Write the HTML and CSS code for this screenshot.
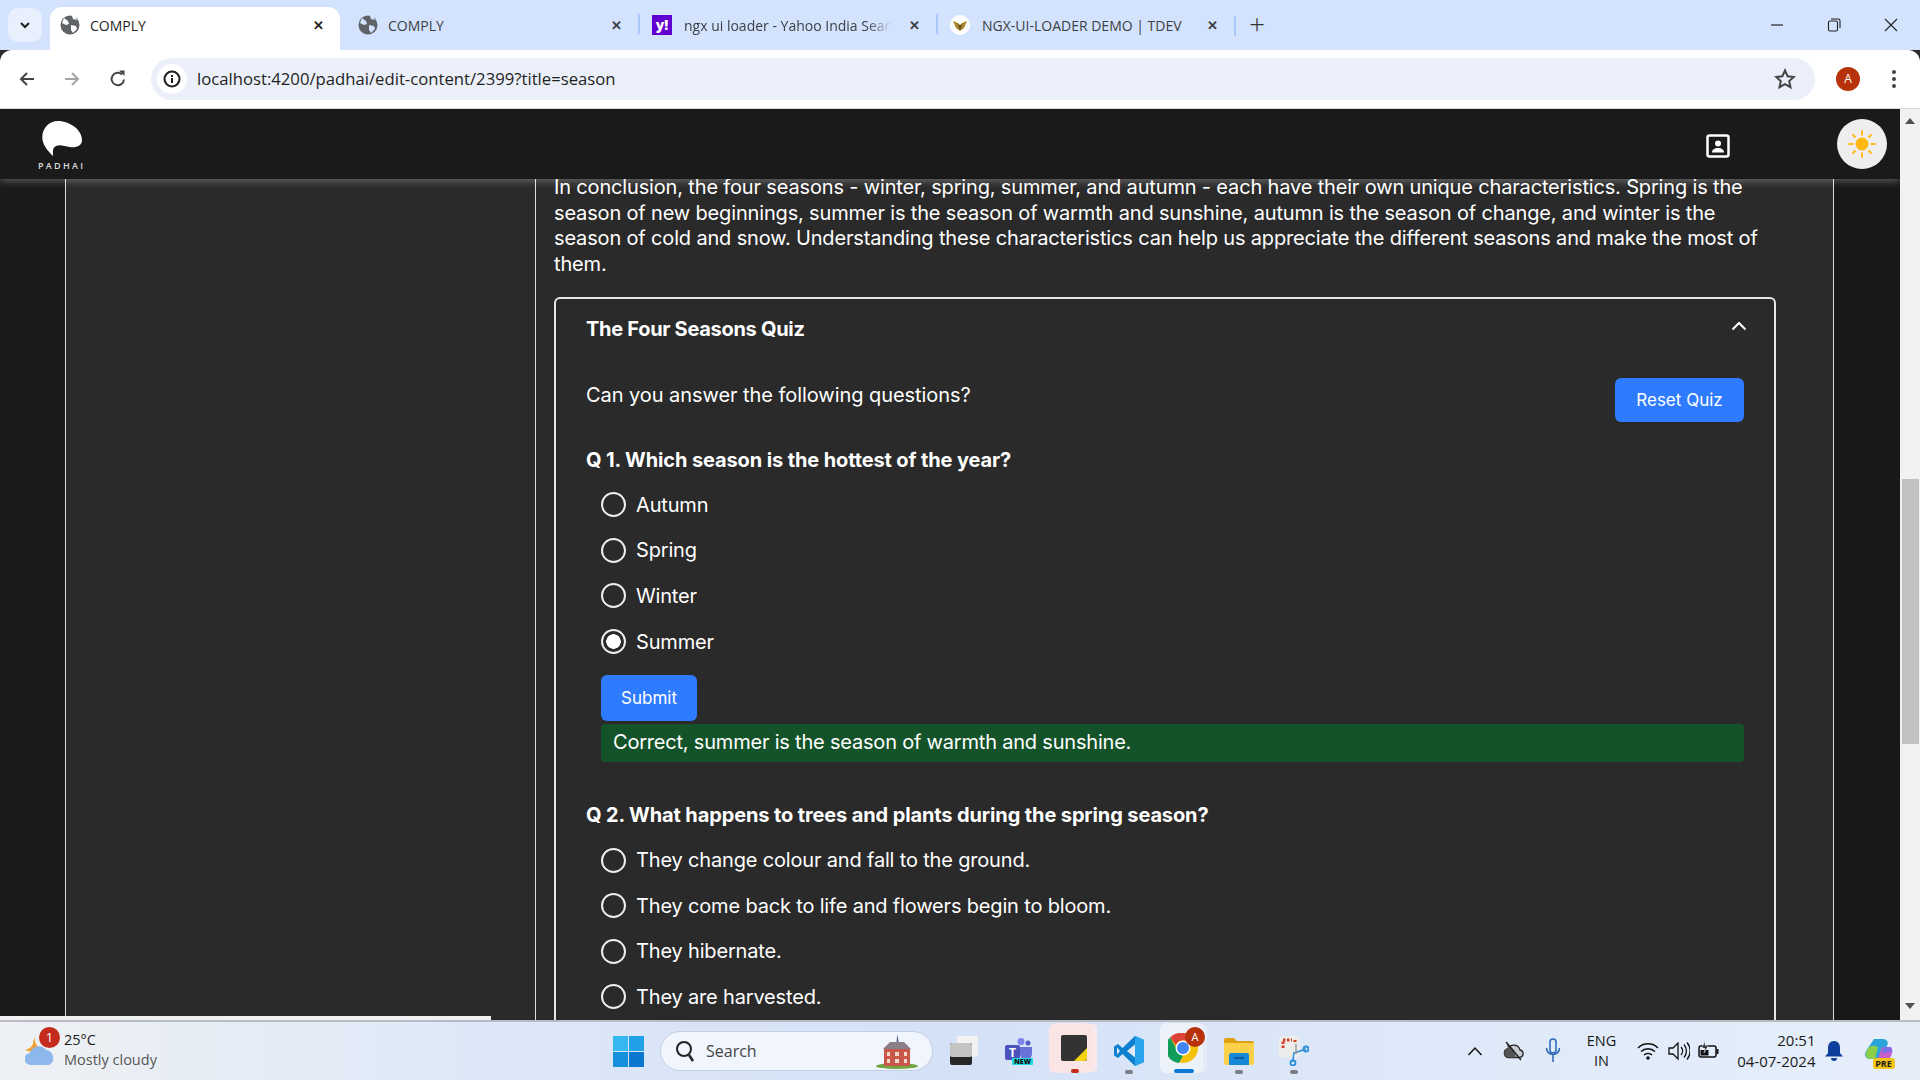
FILE: index.html
```html
<!DOCTYPE html>
<html lang="en">

<head>
    <meta charset="UTF-8">
    <title>COMPLY</title>
    <link rel="stylesheet" href="styles.css">
</head>

<body>
    <!-- browser tabs -->
    <div class="tabstrip">
        <div class="tab-list"><span class="tab-search"><svg width="14" height="14" viewBox="0 0 14 14"><path d="M3 5l4 4 4-4" fill="none" stroke="#1f1f1f" stroke-width="2"/></svg></span></div>
        <div class="tab active">
            <svg class="fav" viewBox="0 0 20 20"><circle cx="10" cy="10" r="9.5" fill="#5f6368"/><path d="M4 3l4 3 1 3-3 1-4-2zM11 10l5 1 1 3-4 4-2-3zM12 1l1 3 4 1-2-4z" fill="#fff"/></svg>
            <span class="tab-title">COMPLY</span><span class="tab-x">✕</span>
        </div>
        <div class="tab">
            <svg class="fav" viewBox="0 0 20 20"><circle cx="10" cy="10" r="9.5" fill="#5f6368"/><path d="M4 3l4 3 1 3-3 1-4-2zM11 10l5 1 1 3-4 4-2-3zM12 1l1 3 4 1-2-4z" fill="#d3e3fd"/></svg>
            <span class="tab-title">COMPLY</span><span class="tab-x">✕</span>
        </div>
        <div class="tab sep">
            <span class="fav yahoo">y!</span>
            <span class="tab-title fade">ngx ui loader - Yahoo India Sear</span><span class="tab-x">✕</span>
        </div>
        <div class="tab sep">
            <svg class="fav" viewBox="0 0 20 20"><circle cx="10" cy="10" r="10" fill="#fff"/><path d="M3 6l5 2 2 2 2-2 5-2-3 7-4 3-4-3z" fill="#a8862c"/><path d="M8 9l2 2 2-2-2 6z" fill="#4a3b18"/></svg>
            <span class="tab-title">NGX-UI-LOADER DEMO | TDEV</span><span class="tab-x">✕</span>
        </div>
        <span class="tab-plus">+</span>
        <div class="win-btns">
            <svg width="14" height="14" viewBox="0 0 14 14"><path d="M1 7h12" stroke="#222" stroke-width="1.2"/></svg>
            <svg width="14" height="14" viewBox="0 0 14 14"><rect x="1.5" y="3" width="9" height="10" rx="1.5" fill="none" stroke="#222" stroke-width="1.1"/><path d="M4 1h7.500a1.500 1.500 0 0 1 1.500 1.500V10" fill="none" stroke="#222" stroke-width="1.1"/></svg>
            <svg width="14" height="14" viewBox="0 0 14 14"><path d="M1 1l12 12M13 1L1 13" stroke="#222" stroke-width="1.1"/></svg>
        </div>
    </div>

    <!-- address bar -->
    <div class="toolbar">
        <svg class="nav-ic" viewBox="0 0 20 20"><path d="M17 10H4M10 4l-6 6 6 6" fill="none" stroke="#444" stroke-width="2"/></svg>
        <svg class="nav-ic" viewBox="0 0 20 20"><path d="M3 10h13M10 4l6 6-6 6" fill="none" stroke="#a3a5a9" stroke-width="2"/></svg>
        <svg class="nav-ic" viewBox="0 0 20 20"><path d="M16 10.500A6.200 6.200 0 1 1 14 5.400" fill="none" stroke="#444" stroke-width="2"/><path d="M11 1.500h5.500V7z" fill="#444"/></svg>
        <div class="omnibox">
            <span class="site-info"><svg width="18" height="18" viewBox="0 0 18 18"><circle cx="9" cy="9" r="7.500" fill="none" stroke="#1f1f1f" stroke-width="2"/><path d="M9 8v5M9 5v2" stroke="#1f1f1f" stroke-width="2"/></svg></span>
            <span class="url">localhost:4200/padhai/edit-content/2399?title=season</span>
            <svg class="star" width="22" height="22" viewBox="0 0 22 22"><path d="M11 2.500l2.600 5.700 6.200.7-4.600 4.200 1.300 6.100-5.500-3.100-5.500 3.100 1.300-6.100-4.600-4.200 6.200-.7z" fill="none" stroke="#444" stroke-width="2"/></svg>
        </div>
        <span class="avatar">A</span>
        <svg class="kebab" width="6" height="20" viewBox="0 0 6 20"><circle cx="3" cy="3" r="2" fill="#444"/><circle cx="3" cy="10" r="2" fill="#444"/><circle cx="3" cy="17" r="2" fill="#444"/></svg>
    </div>

    <!-- app -->
    <div class="app">
        <div class="viewport">
            <header class="topbar">
                <div class="logo">
                    <svg width="40" height="35" viewBox="0 0 40 35"><path d="M16 0C28 0 40 9 40 19c0 6-6 8-12 7-6-1-10-3-14-1-4 2-3 6-3 10C7 31 2 26 .5 19-1 9 6 0 16 0z" fill="#fff"/></svg>
                    <span class="logo-text">PADHAI</span>
                </div>
                <svg class="user-ic" width="24" height="24" viewBox="0 0 24 24"><rect x="1.500" y="1.500" width="21" height="21" rx="2" fill="none" stroke="#fff" stroke-width="2.500"/><circle cx="12" cy="9.500" r="3" fill="#fff"/><path d="M6 18.500c0-3 2.500-4.500 6-4.500s6 1.500 6 4.500z" fill="#fff"/></svg>
                <span class="theme-btn">
                    <svg width="30" height="30" viewBox="0 0 30 30"><circle cx="15" cy="15" r="6.500" fill="#fdb813"/><path d="M15 1.500v5M15 23.500v5M1.500 15h5M23.500 15h5M5.500 5.500l3 3M21.500 21.500l3 3M24.500 5.500l-3 3M8.500 21.500l-3 3" stroke="#fdb813" stroke-width="2"/></svg>
                </span>
            </header>
            <div class="page">
                <div class="rail"></div>
                <aside class="sidebar"></aside>
                <main class="main">
                    <p class="intro">In conclusion, the four seasons - winter, spring, summer, and autumn - each have their own unique characteristics. Spring is the season of new beginnings, summer is the season of warmth and sunshine, autumn is the season of change, and winter is the season of cold and snow. Understanding these characteristics can help us appreciate the different seasons and make the most of them.</p>
                    <section class="quiz">
                        <div class="quiz-head">
                            <h2>The Four Seasons Quiz</h2>
                            <svg width="16" height="10" viewBox="0 0 16 10"><path d="M1.500 8.500L8 2l6.500 6.500" fill="none" stroke="#fff" stroke-width="2"/></svg>
                        </div>
                        <div class="quiz-intro">
                            <span>Can you answer the following questions?</span>
                            <button class="btn reset">Reset Quiz</button>
                        </div>
                        <h3>Q 1. Which season is the hottest of the year?</h3>
                        <ul class="opts">
                            <li><i class="radio"></i>Autumn</li>
                            <li><i class="radio"></i>Spring</li>
                            <li><i class="radio"></i>Winter</li>
                            <li><i class="radio on"></i>Summer</li>
                        </ul>
                        <button class="btn submit">Submit</button>
                        <div class="feedback">Correct, summer is the season of warmth and sunshine.</div>
                        <h3 class="q2">Q 2. What happens to trees and plants during the spring season?</h3>
                        <ul class="opts">
                            <li><i class="radio"></i>They change colour and fall to the ground.</li>
                            <li><i class="radio"></i>They come back to life and flowers begin to bloom.</li>
                            <li><i class="radio"></i>They hibernate.</li>
                            <li><i class="radio"></i>They are harvested.</li>
                        </ul>
                    </section>
                </main>
                <div class="rail-right"></div>
            </div>
            <div class="hscroll"></div>
        </div>
        <div class="vscroll">
            <svg class="arrow-up" width="10" height="6" viewBox="0 0 10 6"><path d="M5 0l5 6H0z" fill="#505050"/></svg>
            <div class="thumb"></div>
            <svg width="10" height="6" viewBox="0 0 10 6"><path d="M5 6L0 0h10z" fill="#505050"/></svg>
        </div>
    </div>

    <!-- windows taskbar -->
    <footer class="taskbar">
        <div class="weather">
            <svg class="cloud" width="30" height="30" viewBox="0 0 30 30"><path d="M10 1c-1 5 1 9 6 11l-7 5-9-3c4-1 7-3 8-6 0-3 1-5 2-7z" fill="#f0a030"/><path d="M6 29a6 6 0 0 1-1-12 9 9 0 0 1 16-3 8 8 0 0 1 3 15z" fill="#8db8ec"/></svg>
            <span class="badge">1</span>
            <div class="weather-text"><span>25°C</span><span class="muted">Mostly cloudy</span></div>
        </div>
        <span class="slot start">
            <svg width="31" height="31" viewBox="0 0 31 31"><rect width="15" height="15" fill="#35b8f0"/><rect x="16" width="15" height="15" fill="#1fa0e8"/><rect y="16" width="15" height="15" fill="#1590dc"/><rect x="16" y="16" width="15" height="15" fill="#0b78cf"/></svg>
        </span>
        <div class="searchbox">
            <svg width="22" height="24" viewBox="0 0 22 24"><circle cx="10" cy="10" r="7" fill="none" stroke="#222" stroke-width="2"/><path d="M15 16l4 6" stroke="#222" stroke-width="2.500"/></svg>
            <span>Search</span>
            <svg class="school" width="44" height="36" viewBox="0 0 44 36"><ellipse cx="22" cy="33" rx="21" ry="3" fill="#6fa63f"/><path d="M9 15h26v18H9z" fill="#c9574a"/><path d="M21 12l1.500-11L24 12z" fill="#55688a"/><path d="M8 16l7-7h14l7 7z" fill="#8a7f86"/><path d="M12 19h3v4h-3zM20 19h4v4h-4zM29 19h3v4h-3zM12 26h3v4h-3zM20 26h4v4h-4zM29 26h3v4h-3z" fill="#f3d9c9"/></svg>
        </div>
        <span class="slot"><svg width="28" height="30" viewBox="0 0 28 30"><rect x="7" y="0" width="21" height="21" rx="2" fill="#f2f2f2"/><rect x="0" y="7" width="22" height="22" rx="2" fill="#262626"/><rect x="0" y="7" width="22" height="14" rx="2" fill="#c4c4c4"/></svg></span>
        <span class="slot"><svg width="28" height="27" viewBox="0 0 28 27"><circle cx="16" cy="3.500" r="3.500" fill="#7b83eb"/><circle cx="23" cy="5" r="2.500" fill="#5059c9"/><path d="M11 9h16v7a6 6 0 0 1-12 0z" fill="#6a71d8"/><rect x="0" y="7" width="15" height="15" rx="2" fill="#4b53bc"/><text x="7.500" y="19" class="teams-t">T</text><rect x="7" y="20" width="21" height="7" rx="1" fill="#1fd8e0"/><text x="17.500" y="26" class="teams-new">NEW</text></svg></span>
        <span class="slot pinned"><svg width="26" height="26" viewBox="0 0 26 26"><rect width="26" height="26" rx="2" fill="#333"/><path d="M26 13v10a3 3 0 0 1-3 3H13z" fill="#f5d312"/></svg><i class="dot pill red"></i></span>
        <span class="slot"><svg width="30" height="30" viewBox="0 0 30 30"><path d="M21 0l9 4v22l-9 4L8.500 18 4 22l-4-2.500v-9L4 8l4.500 4z" fill="#0f7fcf"/><path d="M21 0l9 4v22l-9 4z" fill="#28a4ec"/><path d="M21 8.500L13 15l8 6.500z" fill="#dfe9f7"/><path d="M3 11.500L6 15l-3 3.500z" fill="#dfe9f7"/></svg><i class="dot pill"></i></span>
        <span class="slot active-app">
            <svg width="30" height="30" viewBox="0 0 30 30"><circle cx="15" cy="15" r="15" fill="#f4c20d"/><path d="M15 0a15 15 0 0 1 13 7.500H15a7.500 7.500 0 0 0-7 5L2 4.500A15 15 0 0 1 15 0z" fill="#db4437"/><path d="M2 4.500l7.500 13a7.500 7.500 0 0 0 5.500 5L11 30A15 15 0 0 1 2 4.500z" fill="#0f9d58"/><circle cx="15" cy="15" r="7.500" fill="#fff"/><circle cx="15" cy="15" r="6" fill="#4285f4"/></svg>
            <span class="chrome-av">A</span><i class="dot wide"></i>
        </span>
        <span class="slot"><svg width="30" height="27" viewBox="0 0 30 27"><path d="M0 2a2 2 0 0 1 2-2h8l3 3h15a2 2 0 0 1 2 2v4H0z" fill="#e0a010"/><path d="M0 5h30v20a2 2 0 0 1-2 2H2a2 2 0 0 1-2-2z" fill="#fbd04b"/><path d="M5 17a2 2 0 0 1 2-2h16a2 2 0 0 1 2 2v10H5z" fill="#1688d8"/><path d="M10 20h10" stroke="#0c4f8a" stroke-width="1.500"/></svg><i class="dot pill"></i></span>
        <span class="slot"><svg width="30" height="30" viewBox="0 0 30 30"><rect x="0" y="0" width="21" height="21" rx="2" fill="#ececea"/><path d="M4 12V4h9" fill="none" stroke="#d8402c" stroke-width="3" stroke-dasharray="2.500 1.500"/><path d="M16 4v2" stroke="#d8402c" stroke-width="3"/><path d="M15 16l-1 8M27 13l-12 4" stroke="#2a8fd8" stroke-width="1.500"/><circle cx="14" cy="27" r="2.500" fill="none" stroke="#2a8fd8" stroke-width="1.800"/><circle cx="27" cy="13" r="2.500" fill="none" stroke="#2a8fd8" stroke-width="1.800"/><path d="M17 8v10" stroke="#9a9a9a" stroke-width="1.500"/></svg><i class="dot pill"></i></span>

        <div class="tray">
            <svg class="tray-ic chev" width="16" height="10" viewBox="0 0 16 10"><path d="M1.500 9L8 2l6.500 7" fill="none" stroke="#111" stroke-width="1.500"/></svg>
            <svg class="tray-ic" width="22" height="20" viewBox="0 0 22 20"><path d="M5.500 16.500a4.500 4.500 0 0 1-.5-8.900 6.500 6.500 0 0 1 12 1.400 3.800 3.800 0 0 1-.2 7.500z" fill="#c8cbd0" stroke="#222" stroke-width="1.300"/><path d="M4 3.500c3 0 6 3 9 13H5.500a4.500 4.500 0 0 1-.5-8.900z" fill="#555"/><path d="M3 1l15 18" stroke="#222" stroke-width="1.500"/></svg>
            <svg class="tray-ic" width="16" height="26" viewBox="0 0 16 26"><rect x="5" y="1" width="6" height="14" rx="3" fill="none" stroke="#2a66b8" stroke-width="1.500"/><path d="M1.500 10a6.500 6.500 0 0 0 13 0M8 17v7" fill="none" stroke="#2a66b8" stroke-width="1.500"/></svg>
            <div class="lang"><span>ENG</span><span>IN</span></div>
            <svg class="sys wifi" width="22" height="20" viewBox="0 0 22 20"><path d="M1 7a14 14 0 0 1 20 0M4 10.500a10 10 0 0 1 14 0M7 14a6 6 0 0 1 8 0" fill="none" stroke="#111" stroke-width="1.500"/><circle cx="11" cy="17" r="1.800" fill="#111"/></svg>
            <svg class="sys" width="22" height="20" viewBox="0 0 22 20"><path d="M1 7h4l5-5v16l-5-5H1z" fill="none" stroke="#111" stroke-width="1.300"/><path d="M13 6a6 6 0 0 1 0 8M16 3.500a10 10 0 0 1 0 13M19 1.500a13 13 0 0 1 0 17" fill="none" stroke="#111" stroke-width="1.300"/></svg>
            <svg class="sys" width="22" height="20" viewBox="0 0 22 20"><rect x="1" y="5" width="17" height="11" rx="2" fill="none" stroke="#111" stroke-width="1.500"/><rect x="2.500" y="9" width="8" height="5.500" fill="#111"/><path d="M19.500 8v5" stroke="#111" stroke-width="2"/><path d="M7 0L4 7h3l-1 5 4-7H7z" fill="#111" stroke="#e3ecfa" stroke-width=".6"/></svg>
            <div class="clock"><span>20:51</span><span>04-07-2024</span></div>
            <svg class="bell" width="18" height="20" viewBox="0 0 18 20"><path d="M9 0c4 0 6 3 6 7v5l3 3.500H0L3 12V7c0-4 2-7 6-7z" fill="#0f3f9c"/><path d="M6 17h6a3 3 0 0 1-6 0z" fill="#0f3f9c"/></svg>
            <span class="copilot"><svg width="28" height="26" viewBox="0 0 28 26"><path d="M9 1h9c3 0 4 2 5 4l-6 16H5c-4 0-6-4-4-8z" fill="#2ba4d9"/><path d="M2 12c2-4 5-5 8-4l3 1-3 12H5c-4 0-5-5-3-9z" fill="#8ccf4a"/><path d="M17 9h7c3 0 4 3 3 6-1 5-4 8-8 8h-7z" fill="#c85fc9"/><path d="M18 9h8l1 5-10 1z" fill="#7a6fe8"/></svg><b class="pre">PRE</b></span>
        </div>
    </footer>
</body>

</html>
```

FILE: styles.css
```css
* {
    box-sizing: border-box;
}

html,
body {
    margin: 0;
    height: 100%;
    overflow: hidden;
}

body {
    display: flex;
    flex-direction: column;
    width: 1920px;
    height: 1080px;
    font-family: "Inter", sans-serif;
    background: #2a2a2a;
}

/* tabs */
.tabstrip {
    height: 50px;
    flex: none;
    display: flex;
    align-items: flex-end;
    background: #d3e3fd;
    font-family: "Open Sans", sans-serif;
    font-size: 14px;
    color: #3c4043;
}

.tab-list {
    width: 50px;
    height: 50px;
    padding: 8px 0 0 8px;
}

.tab-search {
    display: flex;
    align-items: center;
    justify-content: center;
    width: 34px;
    height: 34px;
    border-radius: 10px;
    background: #e9f0fd;
}

.tab {
    display: flex;
    align-items: center;
    width: 298px;
    height: 43px;
    padding: 0 0 7px 10px;
    position: relative;
}

.tab:nth-of-type(3) {
    width: 298px;
    padding-left: 18px;
}

.tab.active {
    width: 290px;
    background: #fff;
    border-radius: 12px 12px 0 0;
    color: #1f1f1f;
}

.tab.sep {
    width: 298px;
    padding-left: 14px;
}

.tab.sep:last-of-type {
    width: 297px;
}

.tab.sep::before {
    content: "";
    position: absolute;
    left: 0;
    top: 7px;
    height: 20px;
    width: 2px;
    background: #a8c7fa;
}

.fav {
    width: 20px;
    height: 20px;
    flex: none;
    margin-right: 12px;
}

.tab.active .fav,
.tab:nth-of-type(3) .fav {
    margin-right: 10px;
}

.yahoo {
    background: #6001d2;
    color: #fff;
    font-weight: 800;
    font-size: 14px;
    line-height: 20px;
    text-align: center;
}

.tab-title {
    flex: 1;
    white-space: nowrap;
    overflow: hidden;
}

.fade {
    -webkit-mask-image: linear-gradient(to right, #000 88%, transparent);
    mask-image: linear-gradient(to right, #000 88%, transparent);
}

.tab-x {
    width: 18px;
    margin: 0 13px;
    font-size: 13px;
    font-weight: 700;
    text-align: center;
}

.tab-plus {
    width: 44px;
    height: 50px;
    border-left: 2px solid #a8c7fa;
    border-image: linear-gradient(to bottom, transparent 16px, #a8c7fa 16px, #a8c7fa 36px, transparent 36px) 1;
    font-size: 28px;
    font-weight: 300;
    line-height: 47px;
    text-align: center;
    color: #333;
}

.win-btns {
    margin-left: auto;
    height: 50px;
    display: flex;
    align-items: center;
    gap: 43px;
    padding-right: 22px;
}

/* toolbar */
.toolbar {
    height: 59px;
    flex: none;
    display: flex;
    align-items: center;
    padding: 0 0 1px 17px;
    background: #fff;
    border-bottom: 1px solid #d9d9d9;
    border-radius: 12px 12px 0 0;
}

.nav-ic {
    width: 20px;
    height: 20px;
    margin-right: 25px;
    flex: none;
}

.nav-ic:nth-of-type(2) {
    margin-right: 26px;
}

.nav-ic:nth-of-type(3) {
    margin-right: 23px;
}

.omnibox {
    width: 1664px;
    height: 42px;
    display: flex;
    align-items: center;
    padding: 0 19px 0 6px;
    border-radius: 21px;
    background: #ebeff9;
}

.site-info {
    display: flex;
    align-items: center;
    justify-content: center;
    width: 30px;
    height: 30px;
    border-radius: 50%;
    background: #fff;
}

.url {
    margin-left: 10px;
    font-family: "Open Sans", sans-serif;
    font-size: 16.700px;
    color: #1f1f1f;
}

.star {
    margin-left: auto;
}

.avatar {
    width: 24px;
    height: 24px;
    margin-left: 21px;
    border-radius: 50%;
    background: #b7320a;
    color: #fff;
    font-family: "Open Sans", sans-serif;
    font-size: 12px;
    line-height: 24px;
    text-align: center;
}

.kebab {
    margin-left: 31px;
}

/* app */
.app {
    flex: 1;
    min-height: 0;
    display: flex;
}

.viewport {
    position: relative;
    flex: 1;
    min-width: 0;
    display: flex;
    flex-direction: column;
}

.topbar {
    position: relative;
    z-index: 2;
    height: 70px;
    flex: none;
    display: flex;
    align-items: center;
    background: #1a1a1a;
    box-shadow: 0 2px 8px rgba(255, 255, 255, .3);
}

.logo {
    width: 124px;
    padding-left: 38px;
    display: flex;
    flex-direction: column;
    align-items: flex-start;
}

.logo svg {
    margin: 5px 0 0 4px;
}

.logo-text {
    margin-top: 3px;
    font-family: "Open Sans", sans-serif;
    font-size: 9px;
    font-weight: 600;
    letter-spacing: 2.300px;
    color: #ddd;
}

.user-ic {
    margin: 4px 0 0 auto;
}

.theme-btn {
    display: flex;
    align-items: center;
    justify-content: center;
    width: 50px;
    height: 50px;
    margin: 0 13px 0 107px;
    border-radius: 50%;
    background: #eee;
}

.page {
    flex: 1;
    min-height: 0;
    display: flex;
    overflow: hidden;
    color: #fff;
}

.rail {
    width: 66px;
    flex: none;
    background: #1a1a1a;
    border-right: 1px solid #ddd;
}

.sidebar {
    width: 470px;
    flex: none;
    background: #2a2a2a;
    border-right: 1px solid #ddd;
}

.main {
    width: 1297px;
    flex: none;
    padding: 0 18px;
    overflow: hidden;
    background: #2a2a2a;
}

.rail-right {
    flex: 1;
    background: #181818;
    border-left: 1px solid #ddd;
}

.intro {
    width: 1222px;
    margin: -4px 0 20px;
    font-size: 20px;
    line-height: 25.500px;
    letter-spacing: -0.160px;
}

.quiz {
    width: 1222px;
    padding: 0 30px 40px;
    border: 2px solid #e6e6e6;
    border-bottom: 0;
    border-radius: 6px 6px 0 0;
}

.quiz-head {
    display: flex;
    justify-content: space-between;
    height: 66px;
    padding: 17px 0 0;
}

.quiz-head h2 {
    margin: 0;
    font-size: 20px;
    font-weight: 700;
    line-height: 26px;
    letter-spacing: -0.290px;
}

.quiz-head svg {
    margin: 5px -3px 0 0;
}

.quiz-intro {
    display: flex;
    justify-content: space-between;
    height: 82px;
    padding-top: 17px;
    font-size: 20px;
    line-height: 26px;
    letter-spacing: -0.060px;
}

.btn {
    padding: 0;
    border: 0;
    border-radius: 6px;
    background: #2f7bff;
    color: #fff;
    font-family: "Inter", sans-serif;
    font-size: 17px;
}

.reset {
    width: 129px;
    height: 44px;
    margin-top: -4px;
}

h3 {
    margin: 0;
    font-size: 20px;
    font-weight: 700;
    line-height: 26px;
    letter-spacing: -0.120px;
}

.opts {
    list-style: none;
    margin: 0;
    padding: 9px 0 0 15px;
}

.opts li {
    display: flex;
    align-items: center;
    height: 45.600px;
    font-size: 20px;
    letter-spacing: -0.170px;
}

.radio {
    width: 25px;
    height: 25px;
    margin-right: 10px;
    border: 2px solid #eee;
    border-radius: 50%;
    flex: none;
}

.radio.on {
    background: radial-gradient(circle, #fff 0, #fff 7px, transparent 7.500px);
}

.submit {
    display: block;
    width: 96px;
    height: 46px;
    margin: 11px 0 0 15px;
}

.feedback {
    height: 38px;
    margin: 3px 0 0 15px;
    padding-left: 12px;
    border-radius: 4px;
    background: #14532a;
    font-size: 20px;
    line-height: 37px;
    letter-spacing: -0.200px;
}

.q2 {
    margin-top: 40px;
}

.hscroll {
    position: absolute;
    left: 0;
    bottom: 0;
    width: 491px;
    height: 4px;
    background: #f0f0f0;
}

.vscroll {
    width: 20px;
    flex: none;
    display: flex;
    flex-direction: column;
    align-items: center;
    padding: 9px 0 7px;
    background: #f1f1f1;
}

.thumb {
    width: 17px;
    height: 265px;
    margin: 355px 0 259px;
    background: #c1c1c1;
}

/* taskbar */
.taskbar {
    height: 60px;
    flex: none;
    display: flex;
    align-items: center;
    border-top: 2px solid #b9bcc2;
    background: linear-gradient(to right, #eff1f3 0, #dde8f8 25%, #d5e1f6 50%, #dee9f9 75%, #e6eefa 100%);
    font-family: "Open Sans", sans-serif;
    font-size: 14.500px;
    color: #1a1a1a;
}

.weather {
    position: relative;
    width: 604px;
    display: flex;
    align-items: center;
    padding-left: 25px;
}

.cloud {
    flex: none;
}

.badge {
    position: absolute;
    left: 39px;
    top: -3px;
    width: 21px;
    height: 21px;
    border-radius: 50%;
    background: #c42b1c;
    color: #fff;
    font-size: 13px;
    line-height: 21px;
    text-align: center;
}

.weather-text {
    display: flex;
    flex-direction: column;
    margin: 0 0 2px 9px;
    line-height: 20px;
}

.muted {
    color: #555;
}

.slot {
    position: relative;
    width: 55px;
    height: 58px;
    flex: none;
    display: flex;
    align-items: center;
    justify-content: center;
}

.start {
    width: 48px;
}

.searchbox {
    width: 273px;
    height: 40px;
    margin: 0 3px 0 8px;
    flex: none;
    display: flex;
    align-items: center;
    padding: 0 13px 0 13px;
    border: 1px solid #c5cfe2;
    border-radius: 20px;
    background: #f0f5fe;
    font-size: 16px;
    color: #444;
}

.searchbox span {
    margin-left: 10px;
}

.school {
    margin-left: auto;
}

.teams-t {
    fill: #fff;
    font-size: 12px;
    font-weight: 700;
    text-anchor: middle;
}

.teams-new {
    fill: #111;
    font-size: 7px;
    font-weight: 800;
    text-anchor: middle;
}

.pinned {
    width: 43px;
    height: 50px;
    margin: 0 9px 6px 3px;
    padding-left: 7px;
    border-radius: 6px;
    background: #fbe4e4;
    box-shadow: 6px 0 0 -1px #fbe9ea;
}

.active-app {
    width: 43px;
    height: 50px;
    margin: 0 8px 6px 4px;
    padding-left: 3px;
    border-radius: 6px;
    background: #edf1f9;
    box-shadow: 5px 0 0 -1px #e6ecf8;
}

.dot {
    position: absolute;
    bottom: 6px;
    left: 50%;
    width: 8px;
    height: 4px;
    margin-left: -4px;
    border-radius: 2px;
    background: #7a7d82;
}

.pinned .dot {
    bottom: 0;
    margin-left: 0;
}

.dot.red {
    background: #c42b1c;
}

.dot.wide {
    width: 20px;
    bottom: 0;
    margin-left: -8px;
    background: #0a78d4;
}

.chrome-av {
    position: absolute;
    right: -2px;
    top: 4px;
    width: 20px;
    height: 20px;
    border-radius: 50%;
    background: #b7320a;
    color: #fff;
    font-size: 11px;
    line-height: 20px;
    text-align: center;
}

.tray {
    margin-left: auto;
    display: flex;
    align-items: center;
    padding-right: 27.500px;
}

.tray-ic {
    margin-right: 20.500px;
}

.chev {
    margin-right: 20px;
}

.lang {
    display: flex;
    flex-direction: column;
    align-items: center;
    width: 40px;
    margin-right: 15px;
    line-height: 20px;
}

.sys {
    margin-right: 8px;
}

.wifi {
    margin-right: 9px;
}

.clock {
    display: flex;
    flex-direction: column;
    align-items: flex-end;
    width: 88px;
    font-size: 15px;
    line-height: 21px;
}

.bell {
    margin-left: 9.500px;
}

.copilot {
    position: relative;
    margin-left: 21.500px;
    display: flex;
}

.pre {
    position: absolute;
    right: -2px;
    bottom: -5px;
    width: 22px;
    border-radius: 3px;
    background: #f5c518;
    font-size: 9px;
    line-height: 11px;
    text-align: center;
}
```
